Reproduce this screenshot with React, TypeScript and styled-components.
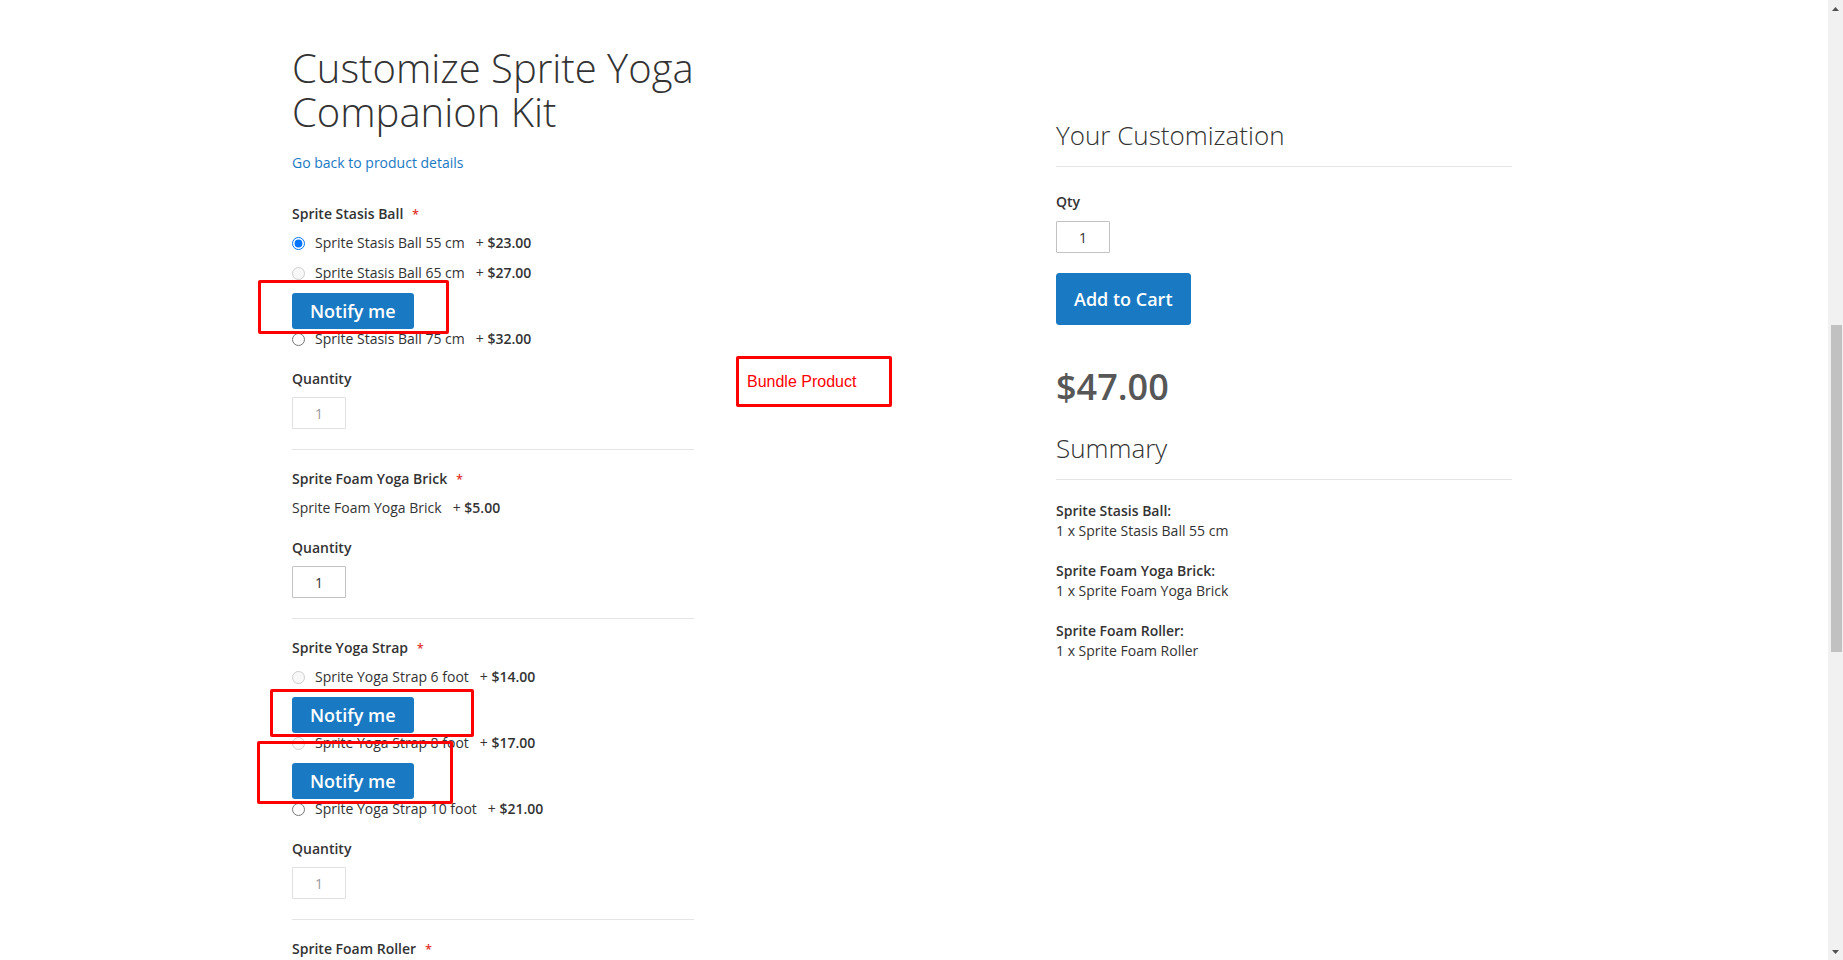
import React from "react";
import styled, { createGlobalStyle } from "styled-components";

const GlobalStyle = createGlobalStyle`
  html, body { margin: 0; padding: 0; height: 100%; overflow: hidden; background: #fff; }
  body {
    font-family: "Open Sans", "Liberation Sans", sans-serif;
    font-size: 14px;
    line-height: 20px;
    color: #333;
  }
  *, *::before, *::after { box-sizing: border-box; }
`;

const Shell = styled.div`
  display: flex;
  height: 100vh;
`;

const Main = styled.main`
  flex: 1;
  min-width: 0;
  overflow: hidden;
`;

const Container = styled.div`
  position: relative;
  max-width: 1244px;
  margin: 0 auto;
  padding: 46px 24px 0 0;
  display: grid;
  grid-template-columns: 402px 1fr 456px;
`;

const OptionsColumn = styled.section`
  display: flex;
  flex-direction: column;
`;

const Title = styled.h1`
  margin: 0;
  font-weight: 300;
  font-size: 40px;
  line-height: 44px;
  color: #333;
  white-space: nowrap;
`;

const BackLink = styled.a`
  display: block;
  margin-top: 19px;
  color: #1979c3;
  text-decoration: none;
  align-self: flex-start;
`;

const Fieldset = styled.div`
  margin-top: 31px;
  display: flex;
  flex-direction: column;
`;

const OptionField = styled.div`
  display: flex;
  flex-direction: column;
  padding-bottom: 20px;
  border-bottom: 1px solid #e4e4e4;
  margin-bottom: 19px;
`;

const FieldLabel = styled.div`
  font-weight: 600;
  margin-bottom: 8px;
`;

const Required = styled.span`
  color: #e02b27;
  font-size: 12px;
  margin-left: 9px;
`;

const ChoiceRow = styled.label`
  display: flex;
  align-items: center;
  height: 20px;
  margin-bottom: 10px;
  white-space: nowrap;
`;

const Radio = styled.input`
  width: 13px;
  height: 13px;
  margin: 0 10px 0 0;
`;

const PriceNotice = styled.span`
  margin-left: 11px;
  b { font-weight: 600; }
`;

const NotifyWrap = styled.div`
  position: relative;
  height: 36px;
  display: flex;
`;

const NotifyButton = styled.button`
  height: 36px;
  padding: 0 18px;
  border: 0;
  border-radius: 3px;
  background: #1979c3;
  color: #fff;
  font-family: "Open Sans", "Liberation Sans", sans-serif;
  font-weight: 600;
  font-size: 18px;
  line-height: 22px;
  cursor: pointer;
`;

const Annotation = styled.div<{ $left: number; $top: number; $w: number; $h: number }>`
  position: absolute;
  left: ${(p) => p.$left}px;
  top: ${(p) => p.$top}px;
  width: ${(p) => p.$w}px;
  height: ${(p) => p.$h}px;
  border: 3px solid #ff0000;
  border-radius: 2px;
  pointer-events: none;
`;

const LabelAnnotation = styled(Annotation)`
  display: flex;
  align-items: center;
  padding-left: 8px;
  font-family: "Liberation Sans", Arial, sans-serif;
  font-size: 16px;
  line-height: 18px;
  color: #ff0000;
`;

const QtyField = styled.div`
  margin-top: 10px;
`;

const QtyInput = styled.input`
  display: block;
  width: 54px;
  height: 32px;
  border: 1px solid #c2c2c2;
  border-radius: 1px;
  padding: 0 4px;
  text-align: center;
  font-family: "Open Sans", "Liberation Sans", sans-serif;
  font-size: 14px;
  color: #333;
  background: #fff;
  &:disabled {
    opacity: 0.5;
    color: #333;
    background: #fff;
  }
`;

const SummaryColumn = styled.aside`
  grid-column: 3;
  padding-top: 71px;
  display: flex;
  flex-direction: column;
  align-items: flex-start;
`;

const BlockTitle = styled.div<{ $gap: number }>`
  align-self: stretch;
  font-weight: 300;
  font-size: 26px;
  line-height: 36px;
  padding-bottom: 13px;
  border-bottom: 1px solid #e4e4e4;
  margin-bottom: ${(p) => p.$gap}px;
`;

const SmallLabel = styled.div`
  font-weight: 600;
  margin-bottom: 9px;
`;

const CartButton = styled.button`
  margin-top: 20px;
  padding: 14px 17px;
  border: 1px solid #1979c3;
  border-radius: 3px;
  background: #1979c3;
  color: #fff;
  font-family: "Open Sans", "Liberation Sans", sans-serif;
  font-weight: 600;
  font-size: 18px;
  line-height: 22px;
  cursor: pointer;
`;

const Price = styled.div`
  margin-top: 44px;
  font-weight: 600;
  font-size: 36px;
  line-height: 36px;
  color: #575757;
  margin-bottom: 25px;
`;

const SummaryItem = styled.div`
  margin-bottom: 20px;
  strong { display: block; font-weight: 600; }
`;

const ScrollBar = styled.div`
  width: 15px;
  flex: none;
  background: #f1f1f1;
  display: flex;
  flex-direction: column;
`;

const ArrowButton = styled.div`
  height: 17px;
  display: flex;
  align-items: center;
  justify-content: center;
`;

const Track = styled.div`
  flex: 1;
  display: flex;
  flex-direction: column;
  align-items: center;
  padding-left: 1px;
`;

const Thumb = styled.div<{ $offset: number; $size: number }>`
  margin-top: ${(p) => p.$offset}px;
  height: ${(p) => p.$size}px;
  width: 11px;
  background: #c1c1c1;
`;

type Box = { left: number; top: number; w: number; h: number };
type Choice = { name: string; price: string; checked?: boolean; disabled?: boolean; notify?: Box };
type Option = { title: string; choices: Choice[]; single?: boolean; qtyDisabled?: boolean };

const options: Option[] = [
  {
    title: "Sprite Stasis Ball",
    qtyDisabled: true,
    choices: [
      { name: "Sprite Stasis Ball 55 cm", price: "$23.00", checked: true },
      { name: "Sprite Stasis Ball 65 cm", price: "$27.00", disabled: true, notify: { left: -34, top: -13, w: 191, h: 54 } },
      { name: "Sprite Stasis Ball 75 cm", price: "$32.00" },
    ],
  },
  {
    title: "Sprite Foam Yoga Brick",
    single: true,
    choices: [{ name: "Sprite Foam Yoga Brick", price: "$5.00" }],
  },
  {
    title: "Sprite Yoga Strap",
    qtyDisabled: true,
    choices: [
      { name: "Sprite Yoga Strap 6 foot", price: "$14.00", disabled: true, notify: { left: -22, top: -8, w: 204, h: 48 } },
      { name: "Sprite Yoga Strap 8 foot", price: "$17.00", disabled: true, notify: { left: -35, top: -22, w: 196, h: 63 } },
      { name: "Sprite Yoga Strap 10 foot", price: "$21.00" },
    ],
  },
  {
    title: "Sprite Foam Roller",
    single: true,
    choices: [{ name: "Sprite Foam Roller", price: "$19.00" }],
  },
];

const summary = [
  { title: "Sprite Stasis Ball:", value: "1 x Sprite Stasis Ball 55 cm" },
  { title: "Sprite Foam Yoga Brick:", value: "1 x Sprite Foam Yoga Brick" },
  { title: "Sprite Foam Roller:", value: "1 x Sprite Foam Roller" },
];

function OptionBlock({ option, index }: { option: Option; index: number }) {
  return (
    <OptionField>
      <FieldLabel>
        {option.title}
        <Required>*</Required>
      </FieldLabel>
      {option.choices.map((c) => (
        <React.Fragment key={c.name}>
          <ChoiceRow>
            {!option.single && (
              <Radio
                type="radio"
                name={`bundle-option-${index}`}
                defaultChecked={c.checked}
                disabled={c.disabled}
              />
            )}
            <span>{c.name}</span>
            <PriceNotice>
              + <b>{c.price}</b>
            </PriceNotice>
          </ChoiceRow>
          {c.notify && (
            <NotifyWrap>
              <NotifyButton type="button">Notify me</NotifyButton>
              <Annotation $left={c.notify.left} $top={c.notify.top} $w={c.notify.w} $h={c.notify.h} />
            </NotifyWrap>
          )}
        </React.Fragment>
      ))}
      <QtyField>
        <FieldLabel>Quantity</FieldLabel>
        <QtyInput type="text" defaultValue="1" disabled={option.qtyDisabled} />
      </QtyField>
    </OptionField>
  );
}

export default function App() {
  return (
    <>
      <GlobalStyle />
      <Shell>
        <Main>
          <Container>
            <OptionsColumn>
              <Title>
                Customize Sprite Yoga
                <br />
                Companion Kit
              </Title>
              <BackLink href="#">Go back to product details</BackLink>
              <Fieldset>
                {options.map((o, i) => (
                  <OptionBlock key={o.title} option={o} index={i} />
                ))}
              </Fieldset>
            </OptionsColumn>

            <LabelAnnotation $left={444} $top={356} $w={156} $h={51}>
              Bundle Product
            </LabelAnnotation>

            <SummaryColumn>
              <BlockTitle $gap={25}>Your Customization</BlockTitle>
              <SmallLabel>Qty</SmallLabel>
              <QtyInput type="text" defaultValue="1" />
              <CartButton type="button">Add to Cart</CartButton>
              <Price>$47.00</Price>
              <BlockTitle $gap={21}>Summary</BlockTitle>
              {summary.map((s) => (
                <SummaryItem key={s.title}>
                  <strong>{s.title}</strong>
                  <div>{s.value}</div>
                </SummaryItem>
              ))}
            </SummaryColumn>
          </Container>
        </Main>
        <ScrollBar>
          <ArrowButton>
            <svg width="7" height="4" viewBox="0 0 7 4">
              <path d="M0 4 L3.5 0 L7 4 Z" fill="#505050" />
            </svg>
          </ArrowButton>
          <Track>
            <Thumb $offset={308} $size={327} />
          </Track>
          <ArrowButton>
            <svg width="7" height="4" viewBox="0 0 7 4">
              <path d="M0 0 L7 0 L3.5 4 Z" fill="#505050" />
            </svg>
          </ArrowButton>
        </ScrollBar>
      </Shell>
    </>
  );
}
